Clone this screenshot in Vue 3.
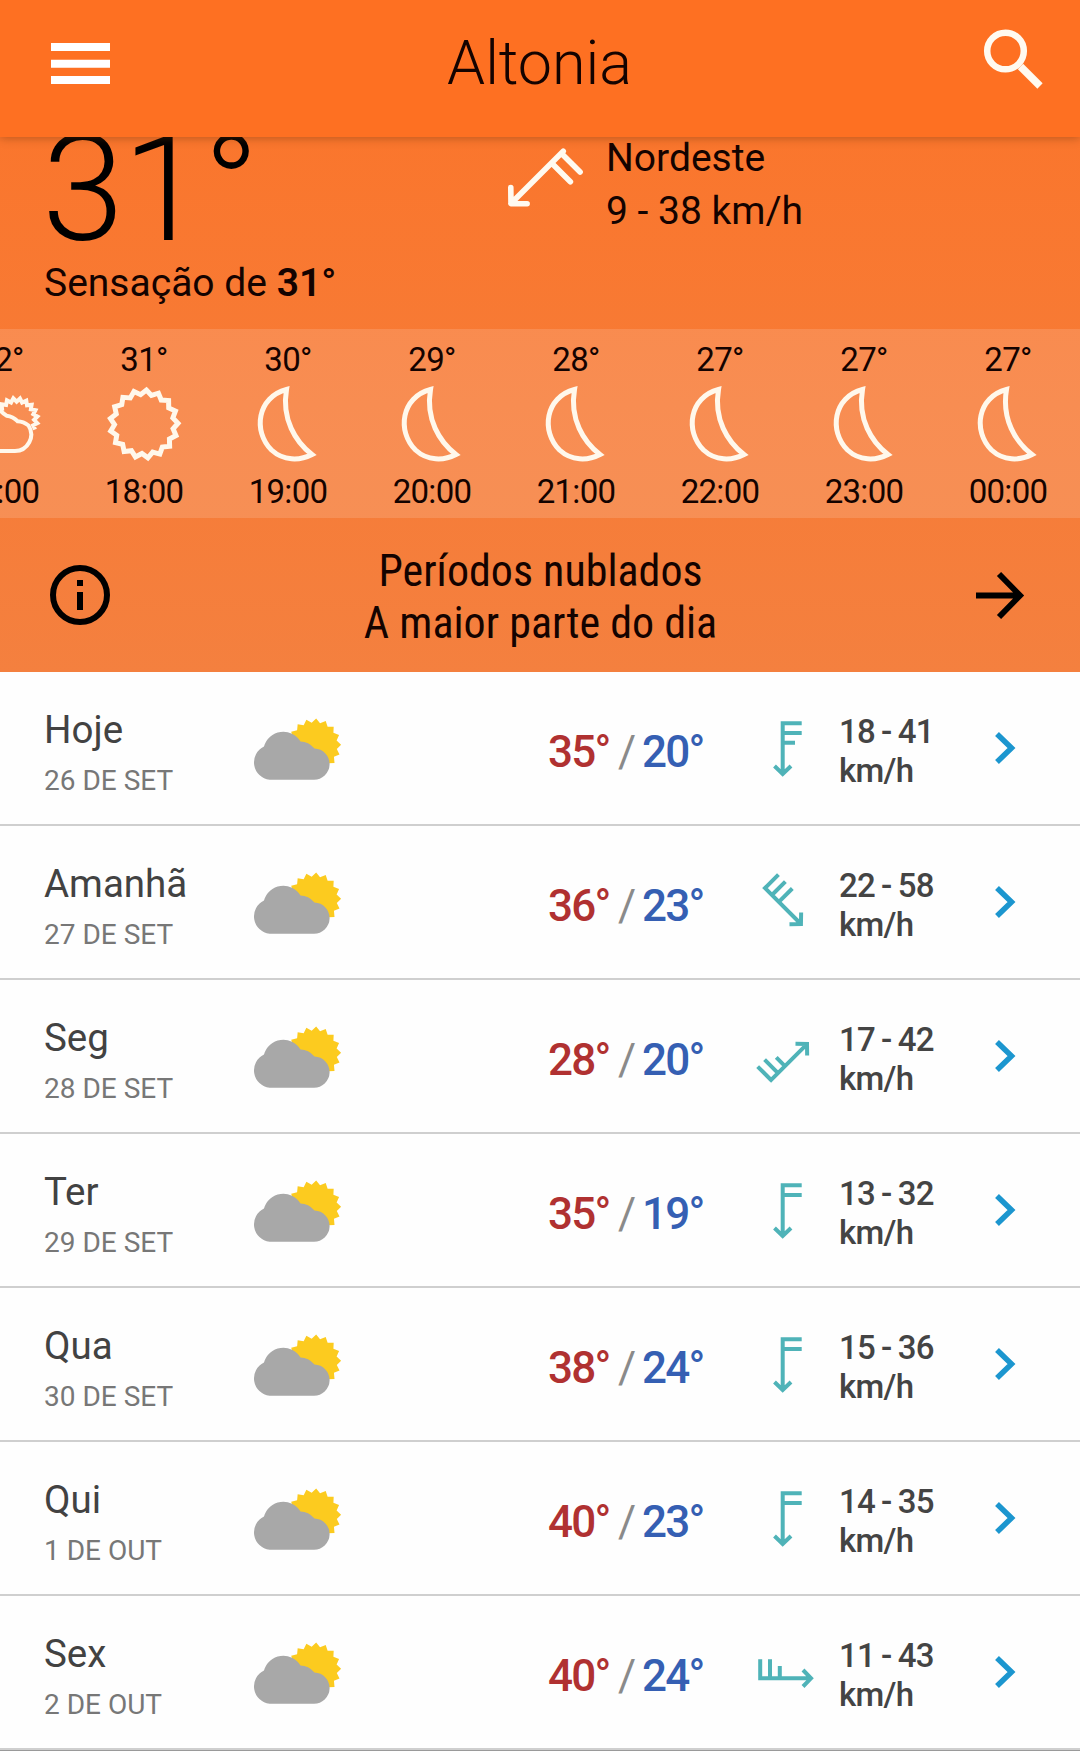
<template>
  <div class="app">
    <header class="bar">
      <svg class="menu" viewBox="0 0 59 41"><path d="M0 4h59M0 20.700h59M0 37h59" /></svg>
      <h1 class="city">Altonia</h1>
      <svg class="search" viewBox="0 0 60 60">
        <circle cx="22.500" cy="23" r="18.300" />
        <path d="M37.500 38.500L57 58" />
      </svg>
    </header>

    <section class="now">
      <div class="current">
        <div class="temp">31°</div>
        <div class="feels">Sensação de <b>31°</b></div>
      </div>
      <svg class="now-wind" viewBox="0 0 60 60">
        <path :d="windPath(2)" transform="rotate(45 30 30)" />
      </svg>
      <div class="now-text">Nordeste<br />9 - 38 km/h</div>
    </section>

    <section class="hours">
      <div v-for="h in hours" :key="h.time" class="hour">
        <div class="hour-temp">{{ h.temp }}°</div>
        <svg class="hour-icon" viewBox="0 0 80 80">
          <path v-if="h.icon === 'sun'" :d="sunPath(40, 40, 34, 29.5)" />
          <path v-else-if="h.icon === 'moon'" d="M38.500 5.500C9.500 13 4.500 47 23.500 66C35.500 77 51.500 77 64 70.500C47.500 58 33.500 35 38.500 5.500Z" />
          <g v-else class="partly">
            <path :d="zigzag(56.3, 35.5, 21.3, 17.8, 20, -62, 21)" />
            <path d="M12 67H55A16.500 16.500 0 0 0 68.500 41.500Q63.500 37.500 57.500 37.200Q53 32.500 46.700 31.800Q41.500 29 39 24" />
          </g>
        </svg>
        <div class="hour-time">{{ h.time }}</div>
      </div>
    </section>

    <section class="summary">
      <svg class="info" viewBox="0 0 60 60">
        <circle cx="30" cy="30" r="27" />
        <path d="M30 15v6M30 27v18" />
      </svg>
      <p class="summary-text"><span>Períodos nublados</span><span>A maior parte do dia</span></p>
      <svg class="arrow" viewBox="0 0 48 48"><path d="M0 24H43M23.500 2L45 24L23.500 46" /></svg>
    </section>

    <section class="days">
      <div v-for="d in days" :key="d.date" class="day">
        <div class="when">
          <div class="name">{{ d.name }}</div>
          <div class="date">{{ d.date }}</div>
        </div>
        <svg class="sky" viewBox="0 0 90 64">
          <path class="sky-sun" :d="sunPath(63.3, 28.3, 26.8, 22.8)" />
          <path class="sky-cloud" d="M18.500 62.700A17.500 17.500 0 0 1 13 29.500A20 20 0 0 1 49.500 24.500Q57.500 24.500 63.500 31.500A15.600 15.600 0 0 1 62.500 62.700Z" />
        </svg>
        <div class="range">
          <span class="max">{{ d.max }}°</span><span class="slash">/</span><span class="min">{{ d.min }}°</span>
        </div>
        <svg class="wind" viewBox="0 0 60 60">
          <path :d="windPath(d.barbs)" :transform="`rotate(${d.dir} 30 30)`" />
        </svg>
        <div class="speed">{{ d.wind }}<br />km/h</div>
        <svg class="chevron" viewBox="0 0 20 32"><path d="M2 2L16.500 16L2 30" /></svg>
      </div>
    </section>
  </div>
</template>

<script setup>
const hours = [
  { temp: 32, time: '17:00', icon: 'partly' },
  { temp: 31, time: '18:00', icon: 'sun' },
  { temp: 30, time: '19:00', icon: 'moon' },
  { temp: 29, time: '20:00', icon: 'moon' },
  { temp: 28, time: '21:00', icon: 'moon' },
  { temp: 27, time: '22:00', icon: 'moon' },
  { temp: 27, time: '23:00', icon: 'moon' },
  { temp: 27, time: '00:00', icon: 'moon' },
]

const days = [
  { name: 'Hoje', date: '26 DE SET', max: 35, min: 20, wind: '18 - 41', dir: 0, barbs: 2.5 },
  { name: 'Amanhã', date: '27 DE SET', max: 36, min: 23, wind: '22 - 58', dir: -45, barbs: 3 },
  { name: 'Seg', date: '28 DE SET', max: 28, min: 20, wind: '17 - 42', dir: -135, barbs: 2.5 },
  { name: 'Ter', date: '29 DE SET', max: 35, min: 19, wind: '13 - 32', dir: 0, barbs: 2 },
  { name: 'Qua', date: '30 DE SET', max: 38, min: 24, wind: '15 - 36', dir: 0, barbs: 2 },
  { name: 'Qui', date: '1 DE OUT', max: 40, min: 23, wind: '14 - 35', dir: 0, barbs: 2 },
  { name: 'Sex', date: '2 DE OUT', max: 40, min: 24, wind: '11 - 43', dir: -90, barbs: 2.5 },
]

// arrow pointing down, one barb per unit, a half barb for the remainder
function windPath(barbs) {
  let d = 'M25.7 1.2V54M17.5 46L25.7 54L34 46'
  for (let i = 0; i < barbs; i++) {
    d += `M25.7 ${3.2 + i * 9.8}H${barbs - i < 1 ? 38 : 44.7}`
  }
  return d
}

// start is in degrees clockwise from the top, each step goes half a tooth
function zigzag(cx, cy, outer, inner, teeth, start, steps) {
  const pts = []
  for (let i = 0; i < steps; i++) {
    const r = i % 2 ? inner : outer
    const a = (i * Math.PI) / teeth + ((start - 90) * Math.PI) / 180
    pts.push(`${(cx + r * Math.cos(a)).toFixed(2)} ${(cy + r * Math.sin(a)).toFixed(2)}`)
  }
  return `M${pts.join('L')}`
}

function sunPath(cx, cy, outer, inner) {
  return zigzag(cx, cy, outer, inner, 17, 4, 34) + 'Z'
}
</script>

<style>
body { margin: 0; overflow: hidden; background: #9a9a9a; }
</style>

<style scoped>
.app { width: 1080px; height: 1751px; overflow: hidden; font-family: Roboto, "Liberation Sans", sans-serif; color: #140300; background: linear-gradient(#fb742a 0, #fa762d 137px, #f4803f 672px, #9a9a9a 672px); }
svg { display: block; flex: none; fill: none; overflow: visible; }

.bar { position: relative; z-index: 2; box-sizing: border-box; height: 137px; padding: 0 37px 12px 51px; display: flex; align-items: center; justify-content: space-between; background: #fe7022; box-shadow: 0 1px 9px rgba(110, 50, 10, .45); }
.menu { width: 59px; height: 41px; stroke: #fff; stroke-width: 8; margin-top: 1px; }
.city { margin: 0 14px 0 0; font-size: 61px; line-height: 72px; font-weight: 300; }
.search { width: 60px; height: 60px; stroke: #fffaf0; stroke-width: 6.5; margin-bottom: 10px; }
.search path { stroke-width: 7.5; }

.now { display: flex; height: 192px; }
.current { width: 495px; padding-left: 44px; box-sizing: border-box; }
.temp { font-size: 148px; line-height: 150px; font-weight: 300; margin: -22px 0 0 -2px; letter-spacing: -1.5px; white-space: nowrap; color: #000; }
.feels { font-size: 39px; line-height: 46px; margin-top: -5px; white-space: nowrap; }
.feels b { font-weight: 600; }
.now-wind { width: 84px; height: 84px; margin: 5px 0 0 2px; stroke: #fffaf0; stroke-width: 4; stroke-linecap: round; stroke-linejoin: round; }
.now-text { margin: -5px 0 0 25px; font-size: 39px; line-height: 53px; }

.hours { display: flex; height: 189px; margin-left: -72px; width: 1152px; background: rgba(255, 255, 255, .14); }
.hour { width: 144px; flex: none; display: flex; flex-direction: column; align-items: center; }
.hour-temp { font-size: 33px; line-height: 38px; margin-top: 12px; letter-spacing: -.7px; }
.hour-icon { width: 80px; height: 80px; margin-top: 5px; stroke: #fff8ec; stroke-width: 5; }
.partly { stroke-width: 4; }
.hour-time { font-size: 33px; line-height: 38px; margin-top: 9px; letter-spacing: -.7px; }

.summary { height: 154px; box-sizing: border-box; padding: 0 57px 0 50px; display: flex; align-items: center; justify-content: space-between; }
.info { width: 60px; height: 60px; stroke: #000; stroke-width: 6; }
.arrow { width: 47px; height: 47px; stroke: #000; stroke-width: 6; }
.summary-text { margin: 4px 0 0; padding-right: 5px; font-family: "Roboto Condensed", Roboto, sans-serif; font-stretch: 75%; font-size: 44px; line-height: 52px; text-align: center; }
.summary-text span { display: block; }

.day { display: flex; align-items: center; box-sizing: border-box; height: 154px; padding-left: 44px; background: #fefefe; border-bottom: 2px solid #cfcfcf; }
.when { width: 207px; }
.name { font-size: 38.5px; line-height: 46px; margin-top: 9px; color: #424242; }
.date { font-size: 28px; line-height: 34px; margin-top: 11px; color: #777; }
.sky { width: 90px; height: 64px; margin-top: 2px; }
.sky-sun { fill: #fccb1f; }
.sky-cloud { fill: #a8a8a8; }
.range { width: 162px; margin: 7px 0 0 207px; display: flex; font-size: 44px; line-height: 50px; font-weight: 500; letter-spacing: -1.8px; white-space: nowrap; }
.max { width: 70px; color: #b03131; }
.slash { width: 24px; color: #8a8a8a; font-weight: 400; }
.min { color: #355fb3; }
.wind { width: 60px; height: 60px; margin: 3px 22px 0 47px; stroke: #4fb3b8; stroke-width: 4; }
.speed { width: 156px; margin-top: 6px; font-size: 33px; line-height: 39.5px; font-weight: 500; color: #444; letter-spacing: -.7px; word-spacing: -1.5px; }
.chevron { width: 20px; height: 32px; stroke: #1c96cf; stroke-width: 5.5; }
</style>
